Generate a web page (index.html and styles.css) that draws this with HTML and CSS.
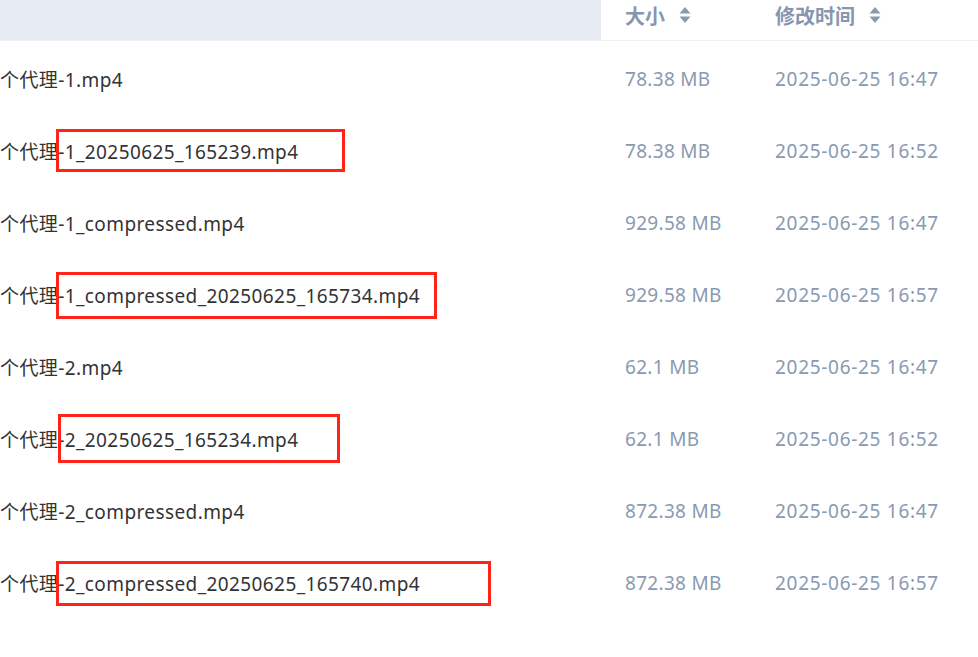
FILE: index.html
```html
<!DOCTYPE html>
<html lang="zh">
<head>
<meta charset="utf-8">
<link rel="stylesheet" href="styles.css">
</head>
<body>
<div class="table">
  <div class="head">
    <div class="hcell name-h"></div>
    <div class="hcell size-h">大小<span class="sort"><svg width="12" height="18" viewBox="0 0 12 18"><path d="M6 1 L11.5 7.5 H0.5 Z M6 17 L11.5 10.5 H0.5 Z" fill="#8a99b1"/></svg></span></div>
    <div class="hcell date-h">修改时间<span class="sort"><svg width="12" height="18" viewBox="0 0 12 18"><path d="M6 1 L11.5 7.5 H0.5 Z M6 17 L11.5 10.5 H0.5 Z" fill="#8a99b1"/></svg></span></div>
  </div>
  <div class="rows">
    <div class="row"><div class="name">个代理-1.mp4</div><div class="size">78.38 MB</div><div class="date">2025-06-25 16:47</div></div>
    <div class="row"><div class="name">个代理-1_20250625_165239.mp4</div><div class="size">78.38 MB</div><div class="date">2025-06-25 16:52</div></div>
    <div class="row"><div class="name">个代理-1_compressed.mp4</div><div class="size">929.58 MB</div><div class="date">2025-06-25 16:47</div></div>
    <div class="row"><div class="name">个代理-1_compressed_20250625_165734.mp4</div><div class="size">929.58 MB</div><div class="date">2025-06-25 16:57</div></div>
    <div class="row"><div class="name">个代理-2.mp4</div><div class="size">62.1 MB</div><div class="date">2025-06-25 16:47</div></div>
    <div class="row"><div class="name">个代理-2_20250625_165234.mp4</div><div class="size">62.1 MB</div><div class="date">2025-06-25 16:52</div></div>
    <div class="row"><div class="name">个代理-2_compressed.mp4</div><div class="size">872.38 MB</div><div class="date">2025-06-25 16:47</div></div>
    <div class="row"><div class="name">个代理-2_compressed_20250625_165740.mp4</div><div class="size">872.38 MB</div><div class="date">2025-06-25 16:57</div></div>
  </div>
  <div class="mark m1"></div>
  <div class="mark m2"></div>
  <div class="mark m3"></div>
  <div class="mark m4"></div>
</div>
</body>
</html>
```

FILE: styles.css
```css
html, body {
  margin: 0;
  padding: 0;
  background: #ffffff;
}
body {
  font-family: "Noto Sans", "Noto Sans CJK SC", sans-serif;
  width: 978px;
  height: 657px;
  overflow: hidden;
}
.table {
  position: relative;
  width: 978px;
}
.head {
  display: flex;
  height: 40px;
  border-bottom: 1px solid #eceff3;
}
.hcell {
  display: flex;
  align-items: center;
  padding-bottom: 10px;
  box-sizing: border-box;
  font-family: "Noto Sans CJK SC", sans-serif;
  font-weight: 700;
  font-size: 20px;
  color: #8796ae;
}
.name-h {
  width: 601px;
  padding-bottom: 0;
  background: #e6eaf1;
}
.size-h {
  width: 174px;
  padding-left: 24px;
}
.date-h {
  flex: 1;
}
.sort {
  display: inline-flex;
  margin-left: 14px;
}
.rows {
  padding-top: 2px;
}
.row {
  display: flex;
  align-items: center;
  height: 72px;
  font-size: 19px;
  letter-spacing: 0.4px;
}
.name {
  width: 601px;
  color: #333333;
  white-space: nowrap;
}
.size {
  width: 174px;
  padding-left: 24px;
  box-sizing: border-box;
  color: #8a99b1;
  letter-spacing: 0.3px;
}
.date {
  flex: 1;
  color: #8a99b1;
  letter-spacing: 0.7px;
}
.mark {
  position: absolute;
  border: 3px solid #ff2318;
  box-sizing: border-box;
}
.m1 { left: 56px; top: 129px; width: 289px; height: 43px; }
.m2 { left: 56px; top: 272px; width: 381px; height: 47px; }
.m3 { left: 58px; top: 414px; width: 282px; height: 49px; }
.m4 { left: 56px; top: 561px; width: 435px; height: 45px; }
```
